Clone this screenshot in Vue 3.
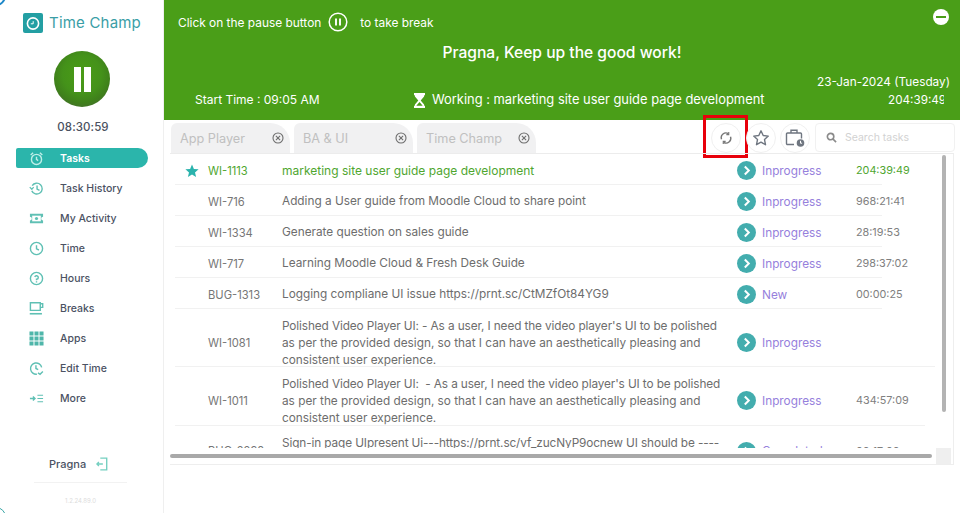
<script setup>
const menu = [
  { label: 'Tasks', icon: 'alarm', active: true },
  { label: 'Task History', icon: 'history' },
  { label: 'My Activity', icon: 'ticket' },
  { label: 'Time', icon: 'clock' },
  { label: 'Hours', icon: 'help' },
  { label: 'Breaks', icon: 'cup' },
  { label: 'Apps', icon: 'grid' },
  { label: 'Edit Time', icon: 'edit' },
  { label: 'More', icon: 'more' }
]
const tabs = ['App Player', 'BA & UI', 'Time Champ']
const rows = [
  { id: 'WI-1113', title: ['marketing site user guide page development'], status: 'Inprogress', time: '204:39:49', current: true, h: 31, rule: 707 },
  { id: 'WI-716', title: ['Adding a User guide from Moodle Cloud to share point'], status: 'Inprogress', time: '968:21:41', h: 31, rule: 707 },
  { id: 'WI-1334', title: ['Generate question on sales guide'], status: 'Inprogress', time: '28:19:53', h: 31, rule: 707 },
  { id: 'WI-717', title: ['Learning Moodle Cloud & Fresh Desk Guide'], status: 'Inprogress', time: '298:37:02', h: 31, rule: 707 },
  { id: 'BUG-1313', title: ['Logging compliane UI issue https://prnt.sc/CtMZfOt84YG9'], status: 'New', time: '00:00:25', h: 31, rule: 707 },
  { id: 'WI-1081', title: ["Polished Video Player UI: - As a user, I need the video player's UI to be polished", 'as per the provided design, so that I can have an aesthetically pleasing and', 'consistent user experience.'], status: 'Inprogress', time: '', h: 58, rule: 760 },
  { id: 'WI-1011', title: ["Polished Video Player UI:\u00a0 - As a user, I need the video player's UI to be polished", 'as per the provided design, so that I can have an aesthetically pleasing and', 'consistent user experience.'], status: 'Inprogress', time: '434:57:09', h: 59, rule: 750 },
  { id: 'BUG-2298', title: ['Sign-in page UIpresent Ui---https://prnt.sc/vf_zucNyP9ocnew UI should be ----', '\u00a0'], status: 'Completed', time: '00:17:00', h: 43, rule: 0 }
]
</script>

<template>
  <div class="app">
    <span class="corner-top"></span>
    <span class="corner-bottom"></span>
    <aside class="side">
      <div class="logo">
        <svg class="logo-mark" viewBox="0 0 20 20">
          <rect width="20" height="20" rx="2" fill="#239fa3" />
          <circle cx="10" cy="10.500" r="5.600" fill="none" stroke="#fff" stroke-width="1.600" />
          <path d="M10.200 8.200v2.600H7.800" fill="none" stroke="#fff" stroke-width="1" />
        </svg>
        <span class="logo-text">Time Champ</span>
      </div>
      <div class="big-pause"><span></span><span></span></div>
      <div class="timer">08:30:59</div>
      <nav class="menu">
        <div v-for="m in menu" :key="m.label" class="item" :class="{ active: m.active }">
          <svg class="micon" viewBox="0 0 16 16" fill="none" :stroke="m.active ? '#bfeee8' : '#5fc0b4'" stroke-width="1.500">
            <template v-if="m.icon === 'alarm'">
              <circle cx="8" cy="9" r="5.400" />
              <path d="M8 6.200V9l1.800 1.200M1.800 4.200 4.400 1.800M14.200 4.200 11.600 1.800" />
            </template>
            <template v-else-if="m.icon === 'history'">
              <path d="M3.400 5A5.800 5.800 0 1 1 3 10.500" />
              <path d="M.8 6.600 3 8.800l2-2.200" stroke-width="1.300" />
              <path d="M8.600 4.800V8.600l2.600 1.400" />
            </template>
            <template v-else-if="m.icon === 'ticket'">
              <path d="M1 3h14v3a2 2 0 0 0 0 4v3H1v-3a2 2 0 0 0 0-4z" fill="#5fc0b4" stroke="none" />
              <path d="M3.400 5h9.200v6H3.400z" fill="#fff" stroke="none" />
              <circle cx="8" cy="8" r="1.700" fill="#5fc0b4" stroke="none" />
            </template>
            <template v-else-if="m.icon === 'clock'">
              <circle cx="8" cy="8" r="6.500" />
              <path d="M8 4.400V8.400l2.600 1.200" />
            </template>
            <template v-else-if="m.icon === 'help'">
              <circle cx="8" cy="8" r="6.500" />
              <path d="M6.200 6.400A1.900 1.900 0 1 1 8 8.800v1M8 11v1.200" />
            </template>
            <template v-else-if="m.icon === 'cup'">
              <path d="M1.500 1.800h10.500v8.200H1.500zM12 3h2.600v3.800H12" />
              <path d="M.8 13.600h13" stroke-width="1.700" />
            </template>
            <template v-else-if="m.icon === 'grid'">
              <path d="M.5.500h4.300v4.300H.5zM5.850.500h4.300v4.300h-4.300zM11.200.500h4.300v4.300h-4.300zM.5 5.850h4.300v4.300H.5zM5.850 5.850h4.300v4.300h-4.300zM11.200 5.850h4.300v4.300h-4.300zM.5 11.200h4.300v4.300H.5zM5.850 11.200h4.300v4.300h-4.300zM11.200 11.200h4.300v4.300h-4.300z" fill="#4fb6aa" stroke="none" />
            </template>
            <template v-else-if="m.icon === 'edit'">
              <path d="M13.500 6.800A6 6 0 1 0 8.500 14" />
              <path d="M7.400 4.400V8l2.400 1.200M9.600 12.600l2.200 1.600 3-3" />
            </template>
            <template v-else>
              <path d="M1 8h5M4.200 5.800 6.400 8l-2.200 2.200" stroke-width="1.500" />
              <path d="M9 4.600h6M9 8h6M9 11.400h6" stroke-width="1.100" />
            </template>
          </svg>
          <span>{{ m.label }}</span>
        </div>
      </nav>
      <div class="user">
        <span>Pragna</span>
        <svg viewBox="0 0 14 16" fill="none" stroke="#74cfc0" stroke-width="1.600">
          <path d="M5 1.200h7.500v13.600H5M1 8h7M3.400 5.600 1 8l2.400 2.400" />
        </svg>
      </div>
      <div class="version">1.2.24.89.0</div>
    </aside>

    <main class="main">
      <header class="hero">
        <div class="hint">
          <span>Click on the pause button</span>
          <svg class="hint-pause" viewBox="0 0 20 20" fill="none" stroke="#fff">
            <circle cx="10" cy="10" r="8.800" stroke-width="1.500" />
            <path d="M8 6.400v7.200M12 6.400v7.200" stroke-width="1.900" />
          </svg>
          <span>to take break</span>
        </div>
        <span class="minus"></span>
        <div class="cheer">Pragna, Keep up the good work!</div>
        <div class="status-line">
          <span class="start">Start Time : 09:05 AM</span>
          <span class="working">
            <svg viewBox="0 0 12 15" fill="#fff"><path d="M.5 0h11v2.200H10.600v1.200L7.200 7.500l3.400 4.100v1.200h.9V15H.5v-2.200h.9v-1.200l3.400-4.100L1.400 3.400V2.200H.5zM6 8.900 3 12.500v.3h6v-.3z" /></svg>
            Working : marketing site user guide page development
          </span>
          <span class="stamp">
            <span class="date">23-Jan-2024 (Tuesday)</span>
            <span class="elapsed">204:39:49</span>
          </span>
        </div>
      </header>

      <section class="toolbar">
        <div class="tabs">
          <div v-for="t in tabs" :key="t" class="tab">
            <span>{{ t }}</span>
            <svg viewBox="0 0 12 12" fill="none" stroke="#6e6e6e" stroke-width="1.100"><circle cx="6" cy="6" r="5" /><path d="M3.900 3.900l4.200 4.200M8.100 3.900 3.900 8.100" /></svg>
          </div>
        </div>
        <div class="tools">
          <button class="tool refresh">
            <svg viewBox="0 0 14 14" fill="none" stroke="#777" stroke-width="1.700">
              <path d="M1.800 8.400A5.400 5.400 0 0 1 9.800 2M12.200 5.600A5.400 5.400 0 0 1 4.200 12" />
              <path d="M10.200 0v3H7.400M3.800 14v-3h2.800" stroke-width="1.300" />
            </svg>
            <span class="highlight"></span>
          </button>
          <button class="tool star-tool">
            <svg class="star" viewBox="0 0 18 18" fill="none" stroke="#6f7680" stroke-width="1.400"><path d="M9 1.800l2.200 4.700 5.100.6-3.800 3.500 1 5.100L9 13.200l-4.500 2.500 1-5.100L1.700 7.100l5.100-.6z" stroke-linejoin="round" /></svg>
          </button>
          <button class="tool">
            <svg class="case" viewBox="0 0 20 20" fill="none" stroke="#6f7680" stroke-width="1.400">
              <path d="M9 16.500H2.500a1 1 0 0 1-1-1V6a1 1 0 0 1 1-1h13a1 1 0 0 1 1 1v4.500M6 5V2.200h6V5" />
              <circle cx="15.500" cy="15" r="3.800" fill="#6f7680" stroke="none" />
              <path d="M15.500 12.800v2.400h1.600" stroke="#fff" stroke-width="1" />
            </svg>
          </button>
          <div class="search">
            <svg viewBox="0 0 12 12" fill="none" stroke="#8b8b8b" stroke-width="1.800"><circle cx="5" cy="5" r="3.500" /><path d="M7.700 7.700 11 11" /></svg>
            <span>Search tasks</span>
          </div>
        </div>
      </section>

      <section class="table">
        <div class="rows">
          <div v-for="r in rows" :key="r.id" class="row" :class="{ current: r.current, multi: r.title.length > 1 }" :style="{ height: r.h + 'px' }">
            <svg v-if="r.current" class="row-star" viewBox="0 0 14 14" fill="#2bb3ad"><path d="M7 .6l1.900 4.300 4.700.4-3.600 3.100 1.100 4.600L7 10.600l-4.100 2.400L4 8.400.4 5.300l4.700-.4z" /></svg>
            <span v-else></span>
            <span class="rid">{{ r.id }}</span>
            <div class="rtitle"><div v-for="line in r.title" :key="line">{{ line }}</div></div>
            <svg class="go" viewBox="0 0 19 19"><circle cx="9.500" cy="9.500" r="9.500" fill="#43adae" /><path d="M7.800 5.500l4 4-4 4" fill="none" stroke="#fff" stroke-width="2" /></svg>
            <span class="rstatus">{{ r.status }}</span>
            <span class="rtime">{{ r.time }}</span>
            <span class="rule" :style="{ width: r.rule + 'px' }"></span>
          </div>
        </div>
        <span class="vbar"></span>
        <span class="hbar"></span>
        <span class="sq"></span>
      </section>
    </main>
  </div>
</template>

<style>
html, body { margin: 0; overflow: hidden; background: #fff; }
</style>

<style scoped>
.app {
  width: 960px;
  height: 513px;
  display: flex;
  position: relative;
  overflow: hidden;
  background: #fff;
  font-family: Inter, "Liberation Sans", sans-serif;
}
.corner-top {
  position: absolute;
  left: -14px;
  top: -14px;
  width: 20px;
  height: 20px;
  border: 2px solid #1e88c9;
  border-radius: 50%;
  box-sizing: border-box;
}
.corner-bottom {
  position: absolute;
  left: -14px;
  bottom: -14px;
  width: 20px;
  height: 20px;
  border: 1px solid #3aa6a6;
  border-radius: 50%;
  box-sizing: border-box;
}
.side {
  width: 164px;
  flex: none;
  box-sizing: border-box;
  border-right: 1px solid #efefef;
  display: flex;
  flex-direction: column;
  align-items: stretch;
  padding-top: 13px;
}
.logo {
  display: flex;
  align-items: center;
  padding-left: 23px;
  gap: 6px;
  height: 20px;
}
.logo-mark { width: 20px; height: 20px; }
.logo-text { font-size: 15px; line-height: 18px; color: #3a9ea6; letter-spacing: .2px; }
.big-pause {
  width: 56px;
  height: 56px;
  margin: 18px 0 0 54px;
  border-radius: 50%;
  background: radial-gradient(circle at 50% 42%, #4a9c16 0%, #44921a 45%, #3f801b 66%, #4c5a42 100%);
  display: flex;
  justify-content: center;
  align-items: center;
  gap: 3px;
}
.big-pause span { width: 7px; height: 25px; background: #fff; }
.timer {
  margin-top: 12px;
  text-align: center;
  padding-left: 3px;
  font-size: 11.500px;
  line-height: 16px;
  font-weight: 500;
  color: #4a5160;
  letter-spacing: .1px;
}
.menu {
  margin-top: 13px;
  display: flex;
  flex-direction: column;
  gap: 10px;
}
.item {
  width: 132px;
  height: 20px;
  margin-left: 16px;
  box-sizing: border-box;
  padding-left: 13px;
  display: flex;
  align-items: center;
  gap: 16px;
  font-size: 10.500px;
  font-weight: 500;
  color: #4b5263;
}
.item.active {
  background: #2bb5ab;
  color: #fff;
  font-weight: 600;
  border-radius: 2px 10px 10px 2px;
}
.micon { width: 15px; height: 15px; flex: none; }
.user {
  margin-top: 46px;
  height: 20px;
  padding-left: 49px;
  display: flex;
  align-items: center;
  gap: 10px;
  font-size: 11px;
  font-weight: 500;
  color: #4b5263;
}
.user svg { width: 12px; height: 14px; }
.version {
  margin: 8px 36px 0 34px;
  border-top: 1px solid #f2f2f2;
  padding-top: 13px;
  text-align: center;
  font-size: 6px;
  line-height: 10px;
  color: #dcdcdc;
}
.main {
  flex: 1;
  min-width: 0;
  display: flex;
  flex-direction: column;
}
.hero {
  height: 120px;
  box-sizing: border-box;
  background: #4a9e18;
  color: #fff;
  position: relative;
  display: flex;
  flex-direction: column;
  padding: 12px 10px 0 14px;
}
.hint {
  display: flex;
  align-items: center;
  height: 20px;
  font-size: 11.900px;
}
.hint-pause { width: 20px; height: 20px; margin: 0 12px 0 7px; }
.minus {
  position: absolute;
  right: 11px;
  top: 9px;
  width: 16px;
  height: 16px;
  border-radius: 50%;
  background: #fff;
}
.minus::after {
  content: '';
  position: absolute;
  left: 3px;
  right: 3px;
  top: 7px;
  height: 2px;
  background: #4a9e18;
}
.cheer {
  margin-top: 11px;
  text-align: center;
  font-size: 15.600px;
  line-height: 20px;
  font-weight: 500;
  margin-left: -4px;
}
.status-line {
  display: flex;
  align-items: flex-end;
  margin-top: 10px;
  padding-left: 17px;
  font-size: 12px;
}
.start { width: 218px; line-height: 18px; }
.working {
  display: flex;
  align-items: center;
  gap: 6px;
  line-height: 18px;
  font-size: 12.900px;
}
.working svg { width: 13px; height: 15px; }
.stamp {
  margin-left: auto;
  display: flex;
  flex-direction: column;
  align-items: flex-end;
}
.date { font-size: 11.800px; line-height: 18px; }
.elapsed { font-size: 11.700px; line-height: 18px; width: 56px; overflow: hidden; margin-right: 6px; white-space: nowrap; }
.toolbar {
  height: 33px;
  padding: 3px 5px 0 7px;
  display: flex;
  justify-content: space-between;
  box-sizing: border-box;
}
.tabs { display: flex; gap: 4px; }
.tab {
  width: 119px;
  height: 30px;
  box-sizing: border-box;
  padding: 0 6px 0 9px;
  display: flex;
  align-items: center;
  justify-content: space-between;
  background: #f1f1f2;
  border-radius: 6px 20px 0 0;
  font-size: 12.700px;
  color: #c0c0c0;
}
.tab svg { width: 12px; height: 12px; }
.tools { display: flex; gap: 5px; align-items: flex-start; }
.tool {
  position: relative;
  width: 30px;
  height: 30px;
  padding: 0;
  background: #fff;
  border: 1px solid #f0f0f0;
  border-radius: 50%;
  display: flex;
  align-items: center;
  justify-content: center;
}
.tool svg { width: 12px; height: 12px; }
.tool .star { width: 18px; height: 18px; }
.tool .case { width: 20px; height: 20px; }
.star-tool { margin-right: -1px; }
.highlight {
  position: absolute;
  left: -9px;
  top: -9px;
  width: 45px;
  height: 43px;
  box-sizing: border-box;
  border: 3px solid #e8000b;
}
.search {
  width: 140px;
  height: 29px;
  box-sizing: border-box;
  border: 1px solid #f1f1f1;
  border-radius: 4px;
  display: flex;
  align-items: center;
  padding-left: 10px;
  gap: 8px;
  font-size: 10.500px;
  color: #d2d2d2;
}
.search svg { width: 11px; height: 11px; }
.table {
  margin-left: 6px;
  width: 784px;
  height: 312px;
  box-sizing: border-box;
  border-top: 1px solid #ececec;
  border-right: 1px solid #eeeeee;
  border-bottom: 1px solid #eeeeee;
  position: relative;
}
.rows { height: 294px; overflow: hidden; }
.row {
  position: relative;
  display: grid;
  grid-template-columns: 38px 74px 455px 25px 94px 80px;
  align-items: center;
  box-sizing: border-box;
  padding-top: 2px;
  font-size: 11.800px;
  color: #6d6d6d;
}
.row.multi { padding-top: 7px; }
.row-star { width: 14px; height: 14px; margin-left: 15px; }
.rid { color: #767676; font-size: 11.200px; }
.rtitle { line-height: 17px; white-space: nowrap; margin-top: -1px; }
.multi .rtitle { margin-top: 2px; }
.multi .rtitle div:first-child { letter-spacing: -.11px; }
.current .rtitle { font-size: 12px; }
.go { width: 19px; height: 19px; }
.rstatus { color: #9680dc; font-size: 11.800px; }
.rtime { color: #808080; font-size: 10.800px; }
.current .rid, .current .rtitle, .current .rtime { color: #4fa62f; }
.rule {
  position: absolute;
  left: 5px;
  bottom: 0;
  height: 1px;
  background: #f1f1f1;
}
.vbar {
  position: absolute;
  left: 772px;
  top: 1px;
  width: 4px;
  height: 257px;
  border-radius: 2px;
  background: #b3b3b3;
}
.hbar {
  position: absolute;
  left: 0;
  top: 300px;
  width: 762px;
  height: 4px;
  border-radius: 2px;
  background: #a9a9a9;
}
.sq {
  position: absolute;
  left: 766px;
  top: 294px;
  width: 15px;
  height: 16px;
  background: #efefef;
}
</style>
